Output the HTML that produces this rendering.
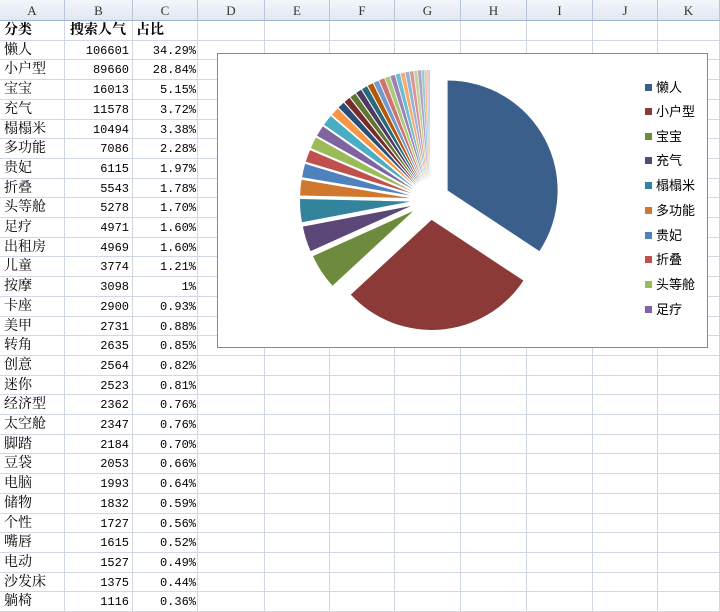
<!DOCTYPE html>
<html><head><meta charset="utf-8">
<style>
body{margin:0;width:720px;height:612px;overflow:hidden;background:#fff;position:relative;font-family:"Liberation Serif","Noto Serif CJK SC",serif;}
.hdr{position:absolute;top:0;height:21px;background:linear-gradient(#f3f6fb,#e1e8f3);border-right:1px solid #b8c4d8;border-bottom:1px solid #9eb6ce;box-sizing:border-box;text-align:center;font:13px "Liberation Serif",serif;line-height:21px;color:#333;}
.vl{position:absolute;top:21px;bottom:0;width:1px;background:#d0d7e5;}
.hl{position:absolute;left:0;right:0;height:1px;background:#d0d7e5;}
.c{position:absolute;height:19px;line-height:20px;font-size:14px;color:#000;white-space:nowrap;}
.n{font-family:"Liberation Mono",monospace;font-size:12px;text-align:right;}
#chart{position:absolute;left:217px;top:53px;width:491px;height:295px;border:1px solid #888;background:#fff;box-sizing:border-box;}
.lg{position:absolute;left:645px;font-size:13px;font-family:"Noto Sans CJK SC",sans-serif;line-height:16px;}
.lg i{display:inline-block;width:7px;height:7px;margin-right:4px;vertical-align:1px;}
</style></head><body>
<div id="g"></div>
<div id="chart"></div>
<svg id="pie" width="720" height="612" style="position:absolute;left:0;top:0"></svg>
<div id="leg"></div>
<script>
var cols=[0,65,133,198,265,330,395,461,527,593,658,720],L="ABCDEFGHIJK",h="";
var top0=21,rh=19.7;
for(var i=0;i<11;i++){h+='<div class="hdr" style="left:'+cols[i]+'px;width:'+(cols[i+1]-cols[i])+'px">'+L[i]+'</div>';h+='<div class="vl" style="left:'+(cols[i+1]-1)+'px"></div>';}
for(var r=1;r<=30;r++)h+='<div class="hl" style="top:'+Math.round(top0+r*rh-1)+'px"></div>';
var d=[["懒人",106601,"34.29%"],["小户型",89660,"28.84%"],["宝宝",16013,"5.15%"],["充气",11578,"3.72%"],["榻榻米",10494,"3.38%"],["多功能",7086,"2.28%"],["贵妃",6115,"1.97%"],["折叠",5543,"1.78%"],["头等舱",5278,"1.70%"],["足疗",4971,"1.60%"],["出租房",4969,"1.60%"],["儿童",3774,"1.21%"],["按摩",3098,"1%"],["卡座",2900,"0.93%"],["美甲",2731,"0.88%"],["转角",2635,"0.85%"],["创意",2564,"0.82%"],["迷你",2523,"0.81%"],["经济型",2362,"0.76%"],["太空舱",2347,"0.76%"],["脚踏",2184,"0.70%"],["豆袋",2053,"0.66%"],["电脑",1993,"0.64%"],["储物",1832,"0.59%"],["个性",1727,"0.56%"],["嘴唇",1615,"0.52%"],["电动",1527,"0.49%"],["沙发床",1375,"0.44%"],["躺椅",1116,"0.36%"]];
function row(r,a,b,c,bold){var t=Math.round(top0+r*rh);var s=bold?'font-weight:bold;':'';
h+='<div class="c" style="top:'+t+'px;left:4px;'+s+'">'+a+'</div>';
h+='<div class="c '+(bold?'':'n')+'" style="top:'+t+'px;left:'+(bold?70:65)+'px;'+(bold?'':'width:64px;')+s+'">'+b+'</div>';
h+='<div class="c '+(bold?'':'n')+'" style="top:'+t+'px;left:'+(bold?136:133)+'px;'+(bold?'':'width:63px;')+s+'">'+c+'</div>';}
row(0,"分类","搜索人气","占比",1);
d.forEach(function(x,i){row(i+1,x[0],x[1],x[2]);});
document.getElementById("g").innerHTML=h;
var vals=d.map(function(x){return x[1]}).concat([900,750,566]);
var tot=vals.reduce(function(a,b){return a+b},0);
var pal=["#3a5f8b","#8c3a38","#6e8b3d","#5b4778","#31849b","#d0782e","#4f81bd","#c0504d","#9bbb59","#8064a2","#4bacc6","#f79646","#2c4d75","#772c2a","#5f7530","#4d3b62","#276a7c","#b65708","#729aca","#cd7371","#afc97a","#9983b5","#6fbdd1","#f9ab6b","#95b3d7","#d99694","#c3d69b","#b3a2c7","#93cddd","#fac090","#c6d4e8","#e6b9b8","#d8e4bc"];
var cx=430,cy=200,R=110,D=20,a=0,s="";
vals.forEach(function(v,i){var sw=v/tot*2*Math.PI,m=a+sw/2;var ox=cx+D*Math.sin(m),oy=cy-D*Math.cos(m);
var x1=ox+R*Math.sin(a),y1=oy-R*Math.cos(a),x2=ox+R*Math.sin(a+sw),y2=oy-R*Math.cos(a+sw);
s+='<path d="M'+ox.toFixed(1)+' '+oy.toFixed(1)+'L'+x1.toFixed(1)+' '+y1.toFixed(1)+'A'+R+' '+R+' 0 '+(sw>Math.PI?1:0)+' 1 '+x2.toFixed(1)+' '+y2.toFixed(1)+'Z" fill="'+pal[i%pal.length]+'"/>';a+=sw;});
document.getElementById("pie").innerHTML=s;
var lg="",ly=[87,111,136,160,185,210,235,259,284,309];
for(var i=0;i<10;i++)lg+='<div class="lg" style="top:'+(ly[i]-8)+'px"><i style="background:'+pal[i]+'"></i>'+d[i][0]+'</div>';
document.getElementById("leg").innerHTML=lg;
</script>
</body></html>
